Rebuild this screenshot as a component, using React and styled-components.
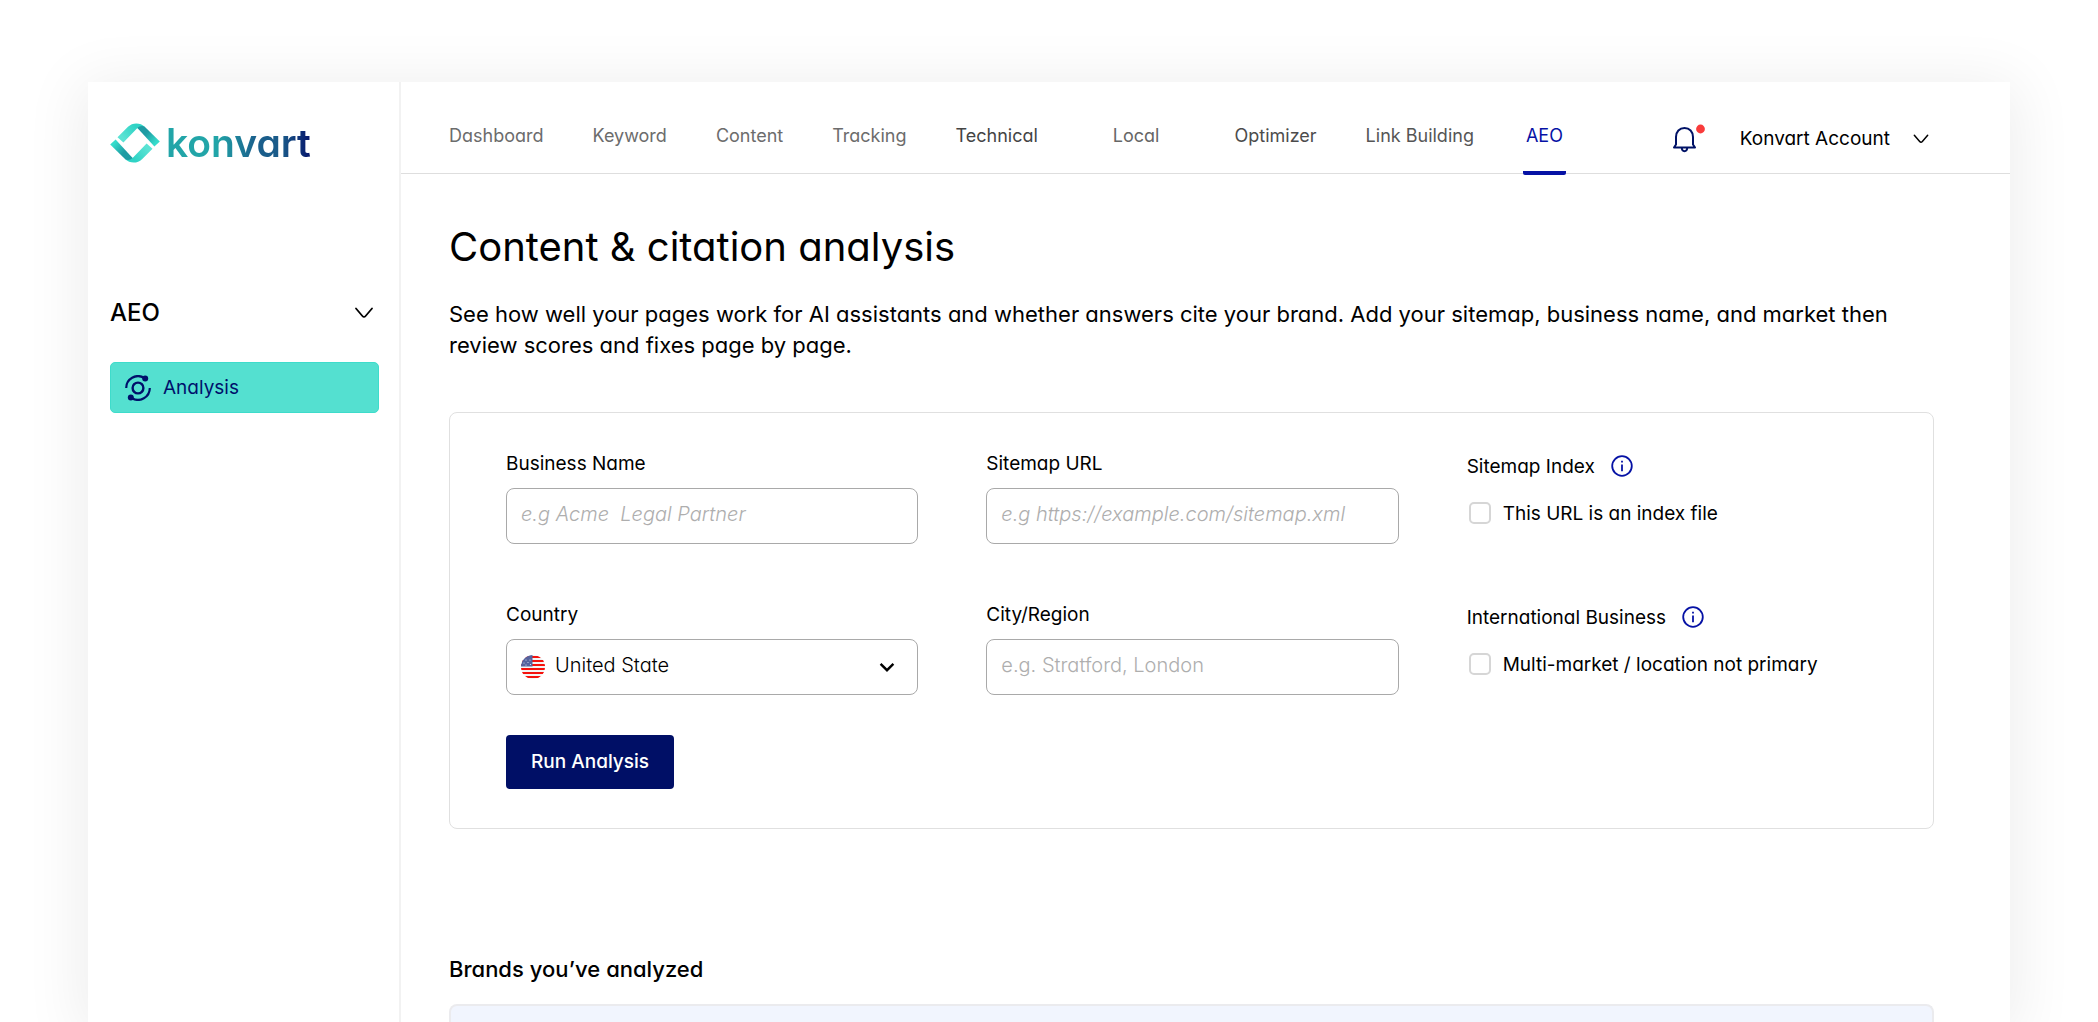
import React, { useState } from 'react'
import styled, { createGlobalStyle } from 'styled-components'

const navItems = [
  { name: 'Dashboard', tone: '#6c6c6c' },
  { name: 'Keyword', tone: '#6c6c6c' },
  { name: 'Content', tone: '#6c6c6c' },
  { name: 'Tracking', tone: '#6c6c6c' },
  { name: 'Technical', tone: '#444444' },
  { name: 'Local', tone: '#666666', roomy: true },
  { name: 'Optimizer', tone: '#4c4c4c' },
  { name: 'Link Building', tone: '#555555' },
  { name: 'AEO', tone: '#0612a5', active: true },
]

export default function App() {
  const [country, setCountry] = useState('us');
  const [isIndex, setIsIndex] = useState(false);
  const [isInternational, setIsInternational] = useState(false);

  return (
    <>
      <GlobalStyle />
      <Page>
        <Window>
          <Sidebar>
            <Brand href="#">
              <LogoMark />
              <BrandName>konvart</BrandName>
            </Brand>
            <SectionToggle type="button">
              AEO
              <Chevron width="20" height="12" stroke="1.8" />
            </SectionToggle>
            <SideLink href="#analysis">
              <OrbitIcon />
              Analysis
            </SideLink>
          </Sidebar>

          <Main>
            <Header>
              <Nav>
                {navItems.map((item) => (
                  <NavLink
                    key={item.name}
                    href="#"
                    $tone={item.tone}
                    $roomy={item.roomy}
                    $active={item.active}
                  >
                    {item.name}
                  </NavLink>
                ))}
              </Nav>
              <Account>
                <BellButton type="button" aria-label="Notifications">
                  <BellIcon />
                </BellButton>
                <AccountButton type="button">
                  Konvart Account
                  <Chevron width="18" height="10" stroke="1.8" />
                </AccountButton>
              </Account>
            </Header>

            <Content>
              <Title>Content &amp; citation analysis</Title>
              <Intro>
                See how well your pages work for AI assistants and whether answers cite your brand. Add your sitemap, business name, and market then review scores and fixes page by page.
              </Intro>

              <Card onSubmit={(e) => e.preventDefault()}>
                <Fields>
                  <Field>
                    <Label htmlFor="business">Business Name</Label>
                    <Input id="business" type="text" placeholder="e.g Acme  Legal Partner" $slanted />
                  </Field>
                  <Field>
                    <Label htmlFor="sitemap">Sitemap URL</Label>
                    <Input id="sitemap" type="text" placeholder="e.g https://example.com/sitemap.xml" $slanted />
                  </Field>
                  <Field>
                    <LabelRow>
                      Sitemap Index
                      <InfoIcon />
                    </LabelRow>
                    <CheckLabel>
                      <Checkbox type="checkbox" checked={isIndex} onChange={(e) => setIsIndex(e.target.checked)} />
                      This URL is an index file
                    </CheckLabel>
                  </Field>
                  <Field>
                    <Label htmlFor="country">Country</Label>
                    <SelectBox>
                      <Flag />
                      <Select id="country" value={country} onChange={(e) => setCountry(e.target.value)}>
                        <option value="us">United State</option>
                      </Select>
                      <SelectArrow>
                        <Chevron width="16" height="10" stroke="3" sharp />
                      </SelectArrow>
                    </SelectBox>
                  </Field>
                  <Field>
                    <Label htmlFor="city">City/Region</Label>
                    <Input id="city" type="text" placeholder="e.g. Stratford, London" />
                  </Field>
                  <Field>
                    <LabelRow>
                      International Business
                      <InfoIcon />
                    </LabelRow>
                    <CheckLabel>
                      <Checkbox type="checkbox" checked={isInternational} onChange={(e) => setIsInternational(e.target.checked)} />
                      Multi-market / location not primary
                    </CheckLabel>
                  </Field>
                </Fields>
                <RunButton type="submit">Run Analysis</RunButton>
              </Card>

              <Subtitle>Brands you’ve analyzed</Subtitle>
              <BrandsPanel />
            </Content>
          </Main>
        </Window>
      </Page>
    </>
  )
}

function Chevron({ width, height, stroke, sharp }) {
  return (
    <svg width={width} height={height} viewBox="0 0 20 12" fill="none" aria-hidden="true">
      <path
        d={sharp ? 'M2 2L10 10L18 2' : 'M2 1.5L8.4 9Q10 10.8 11.6 9L18 1.5'}
        stroke="#000"
        strokeWidth={stroke}
        strokeLinecap={sharp ? 'butt' : 'round'}
      />
    </svg>
  )
}

function LogoMark() {
  return (
    <svg width="50" height="40" viewBox="0 0 50 40" aria-hidden="true">
      <defs>
        <linearGradient id="light" x1="8" y1="18" x2="30" y2="0" gradientUnits="userSpaceOnUse">
          <stop offset="0.2" stopColor="#5be3d4" />
          <stop offset="0.8" stopColor="#2fd3c5" />
        </linearGradient>
        <linearGradient id="dark" x1="28" y1="4" x2="48" y2="21" gradientUnits="userSpaceOnUse">
          <stop offset="0.4" stopColor="#1e9ba3" />
          <stop offset="0.9" stopColor="#35dccb" />
        </linearGradient>
        <g id="band">
          <path d="M7.5 14.2L18 3.8C22.5-.6 30-.8 35 4L31 8L27.4 5L13.4 19.6Z" fill="url(#light)" />
          <path d="M27.4 5C29.5 3 32.5 2.4 35 4L49.8 18.6L44.4 23.4Z" fill="url(#dark)" />
        </g>
      </defs>
      <use href="#band" />
      <use href="#band" transform="rotate(180 25 20)" />
    </svg>
  )
}

function OrbitIcon() {
  return (
    <svg width="26" height="26" viewBox="0 0 26 26" fill="none" stroke="#00106b" strokeWidth="2.2" aria-hidden="true">
      <circle cx="13" cy="13" r="5.4" strokeWidth="2.4" />
      <path d="M1.2 13A11.8 11.8 0 0 1 19 2.8" />
      <path d="M24.8 13A11.8 11.8 0 0 1 7 23.2" />
      <circle cx="20.2" cy="3.6" r="3" fill="#00106b" stroke="none" />
      <circle cx="5.8" cy="22.4" r="3" fill="#00106b" stroke="none" />
    </svg>
  )
}

function BellIcon() {
  return (
    <svg width="34" height="30" viewBox="0 0 34 30" fill="none" stroke="#001266" strokeWidth="2" aria-hidden="true">
      <path d="M4 20.5V13C4 7.5 7.5 4 12.5 4S21 7.5 21 13V20.5L23 23.5H2Z" strokeLinejoin="round" />
      <path d="M9.8 24C10 28.2 15 28.2 15.2 24" />
      <circle cx="28.5" cy="5" r="4.4" fill="#f93b3b" stroke="none" />
    </svg>
  )
}

function InfoIcon() {
  return (
    <svg width="22" height="22" viewBox="0 0 22 22" fill="none" stroke="#0612a5" strokeWidth="1.8" aria-hidden="true">
      <circle cx="11" cy="11" r="9.8" />
      <path d="M11 9.6V16.2" />
      <path d="M11 5.8V7.6" />
    </svg>
  )
}

function Flag() {
  return (
    <svg width="24" height="24" viewBox="0 0 24 24" aria-hidden="true">
      <clipPath id="round"><circle cx="12" cy="12" r="12" /></clipPath>
      <g clipPath="url(#round)">
        <rect width="24" height="24" fill="#f4f4f4" />
        {[0, 4, 8, 12, 16, 20].map((y) => (
          <rect key={y} y={y + 1} width="24" height="2" fill="#f5110c" />
        ))}
        <rect width="11.5" height="11.5" fill="#56639e" />
        <g fill="#dfe3f2">
          <circle cx="5" cy="5" r=".6" />
          <circle cx="9" cy="5" r=".6" />
          <circle cx="7" cy="7.5" r=".6" />
          <circle cx="3" cy="8" r=".6" />
          <circle cx="9.5" cy="9.5" r=".6" />
          <circle cx="5" cy="10" r=".6" />
        </g>
      </g>
    </svg>
  )
}

const GlobalStyle = createGlobalStyle`
  * {
    box-sizing: border-box;
  }
  body {
    margin: 0;
    background: #ffffff;
    color: #000000;
    font-family: Inter, "Liberation Sans", sans-serif;
    font-feature-settings: "cv11";
  }
  button, input, select {
    font: inherit;
    font-feature-settings: inherit;
    color: inherit;
  }
  button {
    border: none;
    background: none;
    padding: 0;
    cursor: pointer;
  }
  a {
    text-decoration: none;
  }
  svg {
    flex-shrink: 0;
  }
`;

const Page = styled.div`
  display: flex;
  min-height: 100vh;
  padding: 82px 88px 0;
  overflow: hidden;
`;

const Window = styled.div`
  display: flex;
  flex: 1;
  min-width: 0;
  background: #ffffff;
  box-shadow: 0 8px 56px 8px rgba(0, 0, 0, 0.07);
`;

const Sidebar = styled.aside`
  display: flex;
  flex-direction: column;
  width: 313px;
  flex-shrink: 0;
  padding: 37px 20px 0 22px;
  border-right: 2px solid #f2f2f2;
`;

const Brand = styled.a`
  display: flex;
  align-items: center;
  gap: 6px;
  height: 48px;
`;

const BrandName = styled.span`
  font-size: 39px;
  line-height: 48px;
  font-weight: 600;
  background: linear-gradient(90deg, #22a5a8 35%, #1a5f8c 62%, #1a5a89 80%, #06156b 100%);
  background-clip: text;
  color: transparent;
`;

const SectionToggle = styled.button`
  display: flex;
  justify-content: space-between;
  align-items: center;
  margin-top: 130px;
  padding-right: 5px;
  font-size: 24px;
  line-height: 32px;
  font-weight: 500;
`;

const SideLink = styled.a`
  display: flex;
  align-items: center;
  gap: 12px;
  height: 51px;
  margin-top: 33px;
  padding: 0 14px;
  border: 1px solid #3edccb;
  border-radius: 5px;
  background: #54e0d0;
  color: #00106b;
  font-size: 19px;
  line-height: 24px;
`;

const Main = styled.main`
  display: flex;
  flex-direction: column;
  flex: 1;
  min-width: 0;
`;

const Header = styled.header`
  display: flex;
  justify-content: space-between;
  height: 92px;
  padding: 0 80px 0 48px;
  border-bottom: 1px solid #dedede;
`;

const Nav = styled.nav`
  display: flex;
  justify-content: space-between;
  flex: 0 1 1117px;
`;

const NavLink = styled.a`
  height: 93px;
  padding: 43px ${(props) => (props.$roomy ? '26px' : props.$active ? '3px' : '0')} 0;
  border-bottom: 4px solid ${(props) => (props.$active ? '#0612a5' : 'transparent')};
  border-radius: 2px;
  color: ${(props) => props.$tone};
  font-size: 18px;
  line-height: 22px;
  white-space: nowrap;
`;

const Account = styled.div`
  display: flex;
  align-items: center;
  gap: 34px;
  padding-top: 23px;
`;

const BellButton = styled.button`
  display: flex;
`;

const AccountButton = styled.button`
  display: flex;
  align-items: center;
  gap: 22px;
  font-size: 19px;
  line-height: 24px;
  white-space: nowrap;
`;

const Content = styled.div`
  display: flex;
  flex-direction: column;
  flex: 1;
  padding: 48px 76px 0 48px;
`;

const Title = styled.h1`
  margin: 0;
  font-size: 40px;
  line-height: 50px;
  font-weight: 400;
`;

const Intro = styled.p`
  margin: 27px 0 51px;
  font-size: 22px;
  line-height: 31px;
`;

const Card = styled.form`
  padding: 38px 54px 39px 56px;
  border: 1px solid #e0e0e0;
  border-radius: 8px;
`;

const Fields = styled.div`
  display: grid;
  grid-template-columns: repeat(3, minmax(0, 1fr));
  gap: 58px 68px;
`;

const Field = styled.div`
  display: flex;
  flex-direction: column;
`;

const Label = styled.label`
  height: 37px;
  font-size: 19px;
  line-height: 26px;
`;

const LabelRow = styled.div`
  display: flex;
  align-items: center;
  gap: 16px;
  height: 30px;
  margin-bottom: 4px;
  font-size: 19px;
`;

const Input = styled.input`
  width: 100%;
  height: 56px;
  padding: 0 14px 4px;
  border: 1px solid #a9a9a9;
  border-radius: 8px;
  background: #ffffff;
  font-size: 20px;
  font-weight: 300;
  &::placeholder {
    color: #aeaeae;
    font-style: ${(props) => (props.$slanted ? 'italic' : 'normal')};
  }
`;

const SelectBox = styled.div`
  position: relative;
  display: flex;
  align-items: center;
  height: 56px;
  padding-left: 14px;
  border: 1px solid #a9a9a9;
  border-radius: 8px;
`;

const Select = styled.select`
  flex: 1;
  height: 54px;
  padding: 0 50px 4px 10px;
  border: none;
  appearance: none;
  background: none;
  font-size: 20px;
  font-weight: 300;
`;

const SelectArrow = styled.span`
  position: absolute;
  right: 22px;
  display: flex;
  pointer-events: none;
`;

const CheckLabel = styled.label`
  display: flex;
  align-items: center;
  gap: 12px;
  height: 56px;
  font-size: 19px;
  white-space: nowrap;
`;

const Checkbox = styled.input`
  width: 22px;
  height: 22px;
  margin: 0 0 0 2px;
  appearance: none;
  border: 2px solid #d6d6d6;
  border-radius: 5px;
  &:checked {
    background: #0612a5;
  }
`;

const RunButton = styled.button`
  height: 54px;
  margin-top: 40px;
  padding: 0 25px 2px;
  border-radius: 4px;
  background: #000f66;
  color: #ffffff;
  font-size: 19px;
  font-weight: 500;
`;

const Subtitle = styled.h2`
  margin: 125px 0 20px;
  font-size: 22px;
  line-height: 30px;
  font-weight: 500;
`;

const BrandsPanel = styled.section`
  flex: 1;
  border: 2px solid #ebebee;
  border-bottom: none;
  border-radius: 8px 8px 0 0;
  background: #f1f5fe;
`;
